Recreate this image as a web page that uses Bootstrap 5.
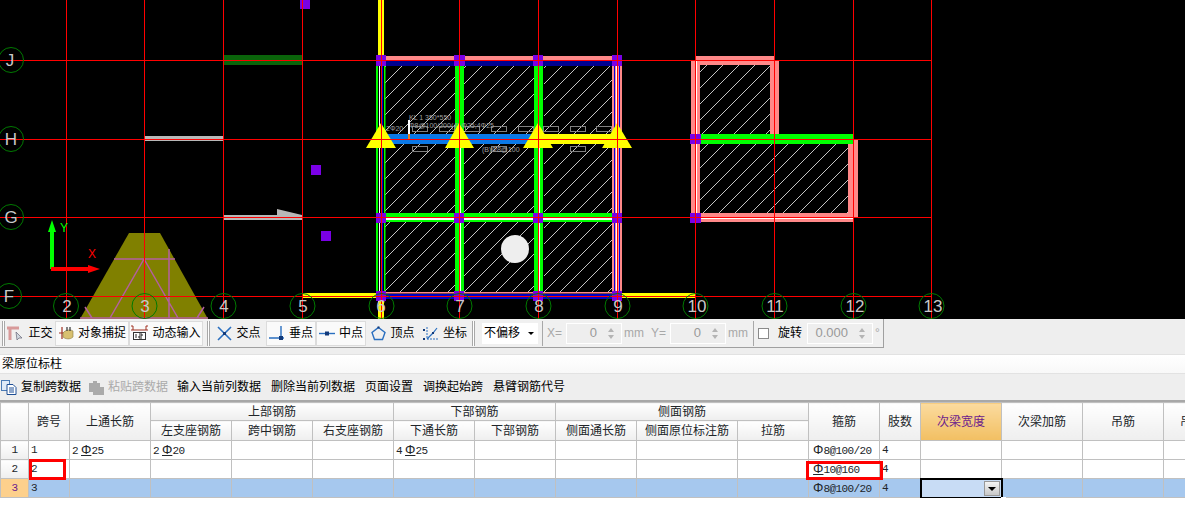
<!DOCTYPE html>
<html lang="zh-CN">

<head>
    <meta charset="UTF-8">
    <meta name="viewport" content="width=device-width, initial-scale=1.0">
    <title>梁原位标柱</title>
    <link href="https://cdn.jsdelivr.net/npm/bootstrap@5.3.0/dist/css/bootstrap.min.css" rel="stylesheet">
    <style>
        html, body { height: 505px; overflow: hidden; }
        body { background: #fff; color: #000; font: 12px/1.2 "Liberation Sans", "Noto Sans CJK SC", sans-serif; }
        .cad-view { display: block; width: 1185px; height: 319px; background: #000; }
        .cad-view text { font-family: "Liberation Sans", sans-serif; }

        /* status toolbar */
        .snap-strip { height: 35px; background: #eee; }
        .snap-bar { width: 884px; height: 29px; background: #f0f0f0; border-right: 1px solid #a0a0a0; border-bottom: 1px solid #a0a0a0; padding-left: 2px; white-space: nowrap; }
        .groove { width: 3px; height: 25px; border-left: 1px solid #a8a8a8; border-right: 1px solid #a8a8a8; background: #fff; flex: none; }
        .thin-sep { width: 1px; height: 25px; background: #a8a8a8; flex: none; }
        .snap-item { height: 25px; gap: 4px; flex: none; white-space: nowrap; }
        .w-two { width: 50px; }
        .w-four { width: 74px; }
        .nudge { margin-left: 2px; }
        .snap-on { background: #fafafa; border: 1px solid #dcdcdc; }
        .offset-pick { width: 56px; height: 21px; background: #fff; padding-left: 2px; margin-left: 7px; margin-right: 4px; flex: none; }
        .caret-down { width: 0; height: 0; border-left: 3px solid transparent; border-right: 3px solid transparent; border-top: 3px solid #000; margin-left: auto; margin-right: 4px; }
        .dim-label { color: #a8a8a8; font-size: 12px; }
        .y-label { margin-left: 7px; }
        .sep-gap { margin-left: 5px; }
        .turn-label { margin-left: 9px; margin-right: 5px; }
        .num-field { width: 56px; height: 21px; background: #eee; border: 1px solid #fff; color: #999; font-size: 13px; flex: none; }
        .num-wide { width: 66px; }
        .num-field span:first-child { margin-left: auto; }
        .spin-arrows { width: 16px; margin-left: 6px; margin-right: 2px; gap: 3px; }
        .spin-arrows i { display: block; width: 0; height: 0; border-left: 3px solid transparent; border-right: 3px solid transparent; margin: 0 auto; }
        .spin-arrows i:first-child { border-bottom: 4px solid #b4b4b4; }
        .spin-arrows i:last-child { border-top: 4px solid #b4b4b4; }
        .check-box { width: 11px; height: 11px; background: #fff; border: 1px solid #8a8a8a; flex: none; }

        /* panel */
        .panel-title { height: 20px; padding-left: 2px; background: linear-gradient(#fff, #f8f8f8); border-top: 1px solid #e2e2e2; border-bottom: 1px solid #e2e2e2; font-size: 12px; }
        .panel-tools { height: 26px; background: #eee; padding-left: 1px; gap: 10px; border-bottom: 2px solid #a8a8a8; box-sizing: content-box; white-space: nowrap; }
        .panel-tool { gap: 4px; }
        .panel-copy { margin-right: -3px; }
        .panel-off { color: #aaa; margin-right: -1px; }

        /* grid */
        .sheet-wrap { width: 1185px; overflow: hidden; }
        .sheet.table { width: 1244px; table-layout: fixed; border-collapse: collapse; margin: 0; --bs-table-bg: transparent; --bs-table-border-color: #c0c0c0; }
        .sheet col { width: 81px; }
        .sheet col.c-head { width: 28px; }
        .sheet col.c-small { width: 41px; }
        .sheet col.c-note { width: 101px; }
        .sheet col.c-mid { width: 71px; }
        .sheet.table th, .sheet.table td { padding: 0; border: 1px solid #c0c0c0; vertical-align: middle; overflow: visible; box-shadow: none; }
        .sheet.table th { font-weight: 400; font-size: 12px; text-align: center; background: linear-gradient(#fff, #eee); line-height: 1; }
        .sheet.table td { height: 19px; background: #fff; font: 11px/1 "Liberation Mono", "Noto Sans CJK SC", monospace; letter-spacing: -.6px; padding-left: 2px; }
        .sheet.table tr.row-current td { background: #a6c8ee; }
        .sheet.table td.row-num { background: linear-gradient(#fff, #eee); text-align: center; padding: 0; }
        .sheet.table tr.row-current td.row-num { background: #fdd08c; color: #6b1a8c; }
        .sheet.table th.col-current { background: linear-gradient(#fbdb9f, #f2bf62); color: #6b1a8c; }
        .sheet.table td.after-line { border-left: 1px solid #000; }
        .head-row-a { height: 18px; }
        .head-row-b { height: 20px; }
        .cell-box { position: relative; }
        .red-mark { position: absolute; border: 3px solid #f00; pointer-events: none; }
        .red-span { left: 0; top: -1px; width: 37px; height: 21px; }
        .red-rebar { left: -3px; top: 1px; width: 77px; height: 19px; }
        .edit-box { position: absolute; left: -1px; top: -1px; width: 83px; height: 21px; background: #c8dcf5; border: 2px solid #000; }
        .edit-drop { position: absolute; right: 1px; top: 1px; width: 16px; height: 15px; background: linear-gradient(#f4f4f4, #c8c8c8); border: 1px solid #999; display: flex; align-items: center; justify-content: center; }
        .edit-drop i { display: block; width: 0; height: 0; border-left: 4px solid transparent; border-right: 4px solid transparent; border-top: 4px solid #000; }
        .edit-handle { position: absolute; right: -5px; bottom: -5px; width: 5px; height: 5px; background: #808080; border: 1px solid #fff; }
        .steel-a, .steel-b { font: 13px/1 "Liberation Sans", sans-serif; letter-spacing: 0; }
        .steel-b { text-decoration: underline; text-underline-offset: 1px; margin-left: 3px; }
        .steel-b.flush { margin-left: 0; }
    </style>
</head>

<body>
    <!-- drawing area -->
    <svg class="cad-view" viewBox="0 0 1185 319" xmlns="http://www.w3.org/2000/svg">
        <defs>
            <pattern id="hatch" width="16" height="16" patternUnits="userSpaceOnUse" patternTransform="translate(4 0)">
                <path d="M0 16L16 0" stroke="#c4c4c4" stroke-width="1" shape-rendering="crispEdges" />
            </pattern>
        </defs>

        <!-- olive trapezoid -->
        <path d="M129 233H160L208 319H80Z" fill="#808000" />
        <path d="M114 259H175M144 259L110 318M144 259L178 318M169 249V318M80 318H208M85 307L92 318M204 307L197 318" stroke="#b45fa0" stroke-width="1.5" fill="none" />

        <!-- hatched panels -->
        <g fill="url(#hatch)">
            <rect x="384" y="65" width="72" height="70" />
            <rect x="464" y="65" width="71" height="70" />
            <rect x="544" y="65" width="69" height="70" />
            <rect x="384" y="144" width="72" height="69" />
            <rect x="464" y="144" width="71" height="69" />
            <rect x="544" y="144" width="69" height="69" />
            <rect x="384" y="222" width="72" height="70" />
            <rect x="464" y="222" width="71" height="70" />
            <rect x="544" y="222" width="69" height="70" />
            <rect x="700" y="65" width="70" height="70" />
            <rect x="700" y="144" width="148" height="69" />
        </g>

        <!-- left beams -->
        <rect x="223" y="55" width="79" height="10" fill="#0a640a" />
        <rect x="145" y="136" width="78" height="5" fill="#b8b8b8" />
        <rect x="223" y="215" width="79" height="5" fill="#b8b8b8" />
        <path d="M277 209L302 215V216H277Z" fill="#b8b8b8" />

        <!-- main frame -->
        <rect x="378" y="0" width="6" height="56" fill="#ff0" />
        <rect x="378" y="298" width="6" height="21" fill="#ff0" />
        <rect x="385" y="56" width="232" height="5" fill="#f88" />
        <rect x="386" y="61" width="230" height="5" fill="#000090" />
        <rect x="376" y="60" width="2" height="236" fill="#0f0" />
        <rect x="379" y="60" width="1" height="236" fill="#fff" />
        <rect x="382" y="60" width="1" height="236" fill="#0000e0" />
        <rect x="384" y="60" width="1.5" height="236" fill="#0f0" />
        <rect x="455" y="60" width="9" height="236" fill="#0f0" />
        <rect x="460" y="140" width="1" height="156" fill="#fff" />
        <rect x="534" y="60" width="9" height="236" fill="#0f0" />
        <rect x="539" y="140" width="1" height="156" fill="#fff" />
        <rect x="612" y="60" width="10" height="236" fill="#f88" />
        <rect x="614" y="60" width="1" height="236" fill="#0000e0" />
        <rect x="616" y="60" width="1" height="236" fill="#fff" />
        <rect x="619" y="60" width="1" height="236" fill="#0000e0" />
        <rect x="385" y="134" width="152" height="10" fill="#0a78e6" />
        <rect x="537" y="134" width="82" height="10" fill="#ff0" />
        <rect x="380" y="213" width="238" height="9" fill="#0f0" />
        <rect x="380" y="218" width="238" height="2" fill="#fff" />
        <rect x="380" y="292" width="238" height="1.5" fill="#f88" />
        <rect x="380" y="294" width="238" height="5" fill="#0000c8" />
        <rect x="302" y="293" width="76" height="5" fill="#ff0" />
        <rect x="619" y="293" width="76" height="5" fill="#ff0" />

        <!-- annotation on H row -->
        <g fill="none" stroke="#808080" stroke-width="1" shape-rendering="crispEdges">
            <rect x="412.5" y="126.5" width="15" height="5" />
            <rect x="439.5" y="126.5" width="15" height="5" />
            <rect x="465.5" y="126.5" width="14" height="5" />
            <rect x="491.5" y="126.5" width="15" height="5" />
            <rect x="518.5" y="126.5" width="15" height="5" />
            <rect x="543.5" y="126.5" width="15" height="5" />
            <rect x="570.5" y="126.5" width="15" height="5" />
            <rect x="596.5" y="126.5" width="15" height="5" />
            <rect x="412.5" y="146.5" width="15" height="5" />
            <rect x="491.5" y="146.5" width="15" height="5" />
            <rect x="570.5" y="146.5" width="15" height="5" />
        </g>
        <g fill="#a0a0a0" font-size="7">
            <text x="409" y="120">KL 1 350*550</text>
            <text x="409" y="128">Φ8@100/200(4) Φ25;4Φ25</text>
            <text x="386" y="131">2Φ20</text>
            <text x="482" y="152">(B)Φ8@100</text>
        </g>
        <rect x="408" y="120" width="2" height="14" fill="#fff" />
        <rect x="408" y="134" width="2" height="5" fill="#e08020" />

        <!-- right block -->
        <rect x="691" y="60" width="9" height="162" fill="#f88" />
        <rect x="696" y="56" width="78" height="9" fill="#f88" />
        <rect x="770" y="60" width="9" height="74" fill="#f88" />
        <rect x="848" y="140" width="10" height="77" fill="#f88" />
        <rect x="700" y="213" width="153" height="9" fill="#f88" />
        <rect x="696" y="60" width="1" height="162" fill="#fff" />
        <rect x="696" y="218" width="157" height="1" fill="#fff" />
        <rect x="774" y="60" width="1" height="74" fill="#fff" />
        <rect x="700" y="134" width="153" height="10" fill="#0f0" />

        <!-- purple grips -->
        <g fill="#7a00e6">
            <rect x="300" y="0" width="10" height="9" />
            <rect x="311" y="165" width="10" height="10" />
            <rect x="321" y="231" width="10" height="10" />
            <rect x="376" y="55" width="10" height="11" />
            <rect x="454" y="55" width="11" height="11" />
            <rect x="533" y="55" width="10" height="11" />
            <rect x="612" y="55" width="10" height="11" />
            <rect x="376" y="213" width="10" height="10" />
            <rect x="454" y="213" width="10" height="10" />
            <rect x="533" y="213" width="10" height="10" />
            <rect x="612" y="213" width="10" height="10" />
            <rect x="376" y="291" width="10" height="10" />
            <rect x="454" y="291" width="10" height="10" />
            <rect x="533" y="291" width="10" height="10" />
            <rect x="612" y="291" width="10" height="10" />
            <rect x="690" y="134" width="11" height="10" />
            <rect x="690" y="213" width="11" height="10" />
        </g>

        <!-- yellow column marks -->
        <g fill="#ff0">
            <path d="M381 123L396 148H366Z" />
            <path d="M459 123L474 148H445Z" />
            <path d="M538 123L553 148H523Z" />
            <path d="M617 123L632 148H602Z" />
        </g>

        <!-- grid lines -->
        <path d="M0 60.5H931M0 139.5H931M0 217.5H931M0 296.5H931M66.5 0V319M144.5 0V319M223.5 0V319M302.5 0V319M381.5 0V319M459.5 0V319M538.5 0V319M617.5 0V319M695.5 0V319M774.5 0V319M853.5 0V319M931.5 0V319" stroke="#f00" stroke-width="1" />

        <circle cx="515" cy="249" r="14" fill="#eee" />

        <!-- UCS -->
        <rect x="50" y="232" width="4" height="37" fill="#0f0" />
        <path d="M52 220L56 232H48Z" fill="#0f0" />
        <rect x="51" y="267" width="38" height="4" fill="#f00" />
        <path d="M100 269L88 265V273Z" fill="#f00" />
        <text x="60" y="232" fill="#0f0" font-size="12">Y</text>
        <text x="88" y="258" fill="#f00" font-size="12">X</text>

        <!-- axis bubbles -->
        <g fill="none" stroke="#007a00" stroke-width="1">
            <circle cx="11" cy="60" r="12.5" />
            <circle cx="11" cy="139" r="12.5" />
            <circle cx="11" cy="217" r="12.5" />
            <circle cx="9" cy="296" r="12.5" />
            <circle cx="66" cy="306" r="12.5" />
            <circle cx="144.5" cy="306" r="12.5" />
            <circle cx="223.5" cy="306" r="12.5" />
            <circle cx="302.5" cy="306" r="12.5" />
            <circle cx="381.5" cy="306" r="12.5" />
            <circle cx="459.5" cy="306" r="12.5" />
            <circle cx="538.5" cy="306" r="12.5" />
            <circle cx="617.5" cy="306" r="12.5" />
            <circle cx="695.5" cy="306" r="12.5" />
            <circle cx="774.5" cy="306" r="12.5" />
            <circle cx="853.5" cy="306" r="12.5" />
            <circle cx="931.5" cy="306" r="12.5" />
        </g>
        <g fill="#c8c8c8" font-size="17" text-anchor="middle">
            <text x="10" y="66">J</text>
            <text x="11" y="145">H</text>
            <text x="11" y="223">G</text>
            <text x="9" y="302">F</text>
            <text x="67" y="312">2</text>
            <text x="145" y="312">3</text>
            <text x="224" y="312">4</text>
            <text x="303" y="312">5</text>
            <text x="381" y="312">6</text>
            <text x="460" y="312">7</text>
            <text x="539" y="312">8</text>
            <text x="618" y="312">9</text>
            <text x="697" y="312">10</text>
            <text x="775" y="312">11</text>
            <text x="855" y="312">12</text>
            <text x="933" y="312">13</text>
        </g>
    </svg>

    <!-- snap toolbar -->
    <div class="snap-strip">
        <div class="snap-bar d-flex align-items-center">
            <span class="groove"></span>
            <div class="snap-item w-two d-flex align-items-center justify-content-center">
                <svg width="17" height="15" viewBox="0 0 17 15"><path d="M0 2H12M3 2V14" stroke="#d89a9a" stroke-width="3" fill="none" /><path d="M9 6L15 12L12 12L10 14Z" fill="#d0d8e0" stroke="#667" stroke-width=".7" /></svg>
                <span>正交</span>
            </div>
            <div class="snap-item w-four snap-on d-flex align-items-center justify-content-center">
                <svg width="16" height="16" viewBox="0 0 16 16"><path d="M1 8H15M4 2V14" stroke="#a03020" stroke-width="1.2" /><path d="M5 8C7 5 12 4 15 6V12C12 15 7 14 5 12Z" fill="#d8c070" stroke="#8a7a40" stroke-width=".6" /><path d="M9 2V6M12 2V6" stroke="#333" stroke-width="1.2" /></svg>
                <span>对象捕捉</span>
            </div>
            <div class="snap-item w-four snap-on d-flex align-items-center justify-content-center">
                <svg width="17" height="16" viewBox="0 0 17 16"><path d="M0 1H2M15 1H17M2 1V5M15 1V5M0 5H17" stroke="#a03020" stroke-width="1" fill="none" /><rect x="2.5" y="7.5" width="12" height="7" fill="#fff" stroke="#333" /><path d="M5 9V13M8 9H11V11H8V13H11" stroke="#222" stroke-width="1" fill="none" /></svg>
                <span>动态输入</span>
            </div>
            <span class="groove ms-1 me-1"></span>
            <div class="snap-item w-two d-flex align-items-center justify-content-center">
                <svg width="15" height="15" viewBox="0 0 15 15"><path d="M1 1L14 14M14 1L1 14" stroke="#2a6fc0" stroke-width="1.6" /><rect x="6" y="6" width="3" height="3" fill="#123a7a" /></svg>
                <span>交点</span>
            </div>
            <div class="snap-item w-two snap-on nudge d-flex align-items-center justify-content-center">
                <svg width="16" height="15" viewBox="0 0 16 15"><path d="M0 12H15M12 0V12" stroke="#2a6fc0" stroke-width="1.4" /><rect x="10" y="10" width="4" height="4" fill="#123a7a" /></svg>
                <span>垂点</span>
            </div>
            <div class="snap-item w-two snap-on d-flex align-items-center justify-content-center">
                <svg width="16" height="15" viewBox="0 0 16 15"><path d="M0 7.5H16" stroke="#2a6fc0" stroke-width="1.4" /><rect x="6" y="5.5" width="4" height="4" fill="#123a7a" /></svg>
                <span>中点</span>
            </div>
            <div class="snap-item w-two nudge d-flex align-items-center justify-content-center">
                <svg width="15" height="15" viewBox="0 0 15 15"><path d="M7.5 1.5L14 6.5L11.5 13.5H3.5L1 6.5Z" fill="none" stroke="#2a6fc0" stroke-width="1.4" /><rect x="6.5" y="0.5" width="2" height="2" fill="#123a7a" /></svg>
                <span>顶点</span>
            </div>
            <div class="snap-item w-two nudge d-flex align-items-center justify-content-center">
                <svg width="16" height="15" viewBox="0 0 16 15"><path d="M4 1V13H15" stroke="#2a6fc0" stroke-width="1" stroke-dasharray="2 1" fill="none" /><path d="M4 13L10 7L14 2" stroke="#2a6fc0" stroke-width="1.2" fill="none" /><rect x="0" y="3" width="2" height="2" fill="#123a7a" /><rect x="0" y="12" width="2" height="2" fill="#123a7a" /><rect x="9" y="6" width="2" height="2" fill="#123a7a" /></svg>
                <span>坐标</span>
            </div>
            <span class="groove nudge"></span>
            <div class="offset-pick d-flex align-items-center"><span>不偏移</span><span class="caret-down"></span></div>
            <span class="thin-sep me-1"></span>
            <span class="dim-label">X=</span>
            <div class="num-field d-flex align-items-center ms-1"><span>0</span><span class="spin-arrows d-flex flex-column"><i></i><i></i></span></div>
            <span class="dim-label nudge">mm</span>
            <span class="dim-label y-label">Y=</span>
            <div class="num-field d-flex align-items-center ms-1"><span>0</span><span class="spin-arrows d-flex flex-column"><i></i><i></i></span></div>
            <span class="dim-label nudge">mm</span>
            <span class="thin-sep sep-gap"></span>
            <span class="check-box ms-1"></span>
            <span class="turn-label">旋转</span>
            <div class="num-field num-wide d-flex align-items-center"><span>0.000</span><span class="spin-arrows d-flex flex-column"><i></i><i></i></span></div>
            <span class="dim-label nudge">°</span>
        </div>
    </div>

    <!-- panel title and tools -->
    <div class="panel-title d-flex align-items-center">梁原位标柱</div>
    <div class="panel-tools d-flex align-items-center">
        <div class="panel-tool panel-copy d-flex align-items-center">
            <svg width="16" height="15" viewBox="0 0 16 15"><rect x="0.5" y="0.5" width="8" height="10" fill="#dfeaf8" stroke="#4a7ab5" /><path d="M6 4.5H12L15 7.5V14.5H6Z" fill="#fff" stroke="#1f4f95" /><path d="M8 8H13M8 10H13M8 12H13" stroke="#1f4f95" /></svg>
            <span>复制跨数据</span>
        </div>
        <div class="panel-tool panel-off d-flex align-items-center">
            <svg width="16" height="15" viewBox="0 0 16 15"><path d="M1 3H5V1H9V3H12V7H16V15H5V12H1Z" fill="#aaa" /></svg>
            <span>粘贴跨数据</span>
        </div>
        <span>输入当前列数据</span>
        <span>删除当前列数据</span>
        <span>页面设置</span>
        <span>调换起始跨</span>
        <span>悬臂钢筋代号</span>
    </div>

    <!-- rebar sheet -->
    <div class="sheet-wrap">
        <table class="sheet table mb-0">
            <colgroup>
                <col class="c-head"><col class="c-small"><col><col><col><col><col><col><col><col class="c-note"><col class="c-mid"><col class="c-mid"><col class="c-small"><col><col><col><col>
            </colgroup>
            <thead>
                <tr class="head-row-a">
                    <th rowspan="2"></th>
                    <th rowspan="2">跨号</th>
                    <th rowspan="2">上通长筋</th>
                    <th colspan="3">上部钢筋</th>
                    <th colspan="2">下部钢筋</th>
                    <th colspan="3">侧面钢筋</th>
                    <th rowspan="2">箍筋</th>
                    <th rowspan="2">肢数</th>
                    <th rowspan="2" class="col-current">次梁宽度</th>
                    <th rowspan="2">次梁加筋</th>
                    <th rowspan="2">吊筋</th>
                    <th rowspan="2">吊筋锚固</th>
                </tr>
                <tr class="head-row-b">
                    <th>左支座钢筋</th>
                    <th>跨中钢筋</th>
                    <th>右支座钢筋</th>
                    <th>下通长筋</th>
                    <th>下部钢筋</th>
                    <th>侧面通长筋</th>
                    <th>侧面原位标注筋</th>
                    <th>拉筋</th>
                </tr>
            </thead>
            <tbody>
                <tr>
                    <td class="row-num">1</td><td>1</td>
                    <td class="after-line">2<span class="steel-b">Φ</span>25</td>
                    <td>2<span class="steel-b">Φ</span>20</td><td></td><td></td>
                    <td>4<span class="steel-b">Φ</span>25</td><td></td><td></td><td></td><td></td>
                    <td class="ps-1"><span class="steel-a">Φ</span>8@100/20</td><td>4</td><td></td><td></td><td></td><td></td>
                </tr>
                <tr>
                    <td class="row-num">2</td>
                    <td class="cell-box">2<span class="red-mark red-span"></span></td>
                    <td class="after-line"></td>
                    <td></td><td></td><td></td><td></td><td></td><td></td><td></td><td></td>
                    <td class="cell-box ps-1"><span class="steel-b flush">Φ</span>10@160<span class="red-mark red-rebar"></span></td>
                    <td>4</td><td></td><td></td><td></td><td></td>
                </tr>
                <tr class="row-current">
                    <td class="row-num">3</td><td>3</td>
                    <td class="after-line"></td>
                    <td></td><td></td><td></td><td></td><td></td><td></td><td></td><td></td>
                    <td class="ps-1"><span class="steel-a">Φ</span>8@100/20</td><td>4</td>
                    <td class="cell-box"><div class="edit-box"><span class="edit-drop"><i></i></span><span class="edit-handle"></span></div></td>
                    <td></td><td></td><td></td>
                </tr>
            </tbody>
        </table>
    </div>

    <script src="https://cdn.jsdelivr.net/npm/bootstrap@5.3.0/dist/js/bootstrap.bundle.min.js"></script>
</body>

</html>
